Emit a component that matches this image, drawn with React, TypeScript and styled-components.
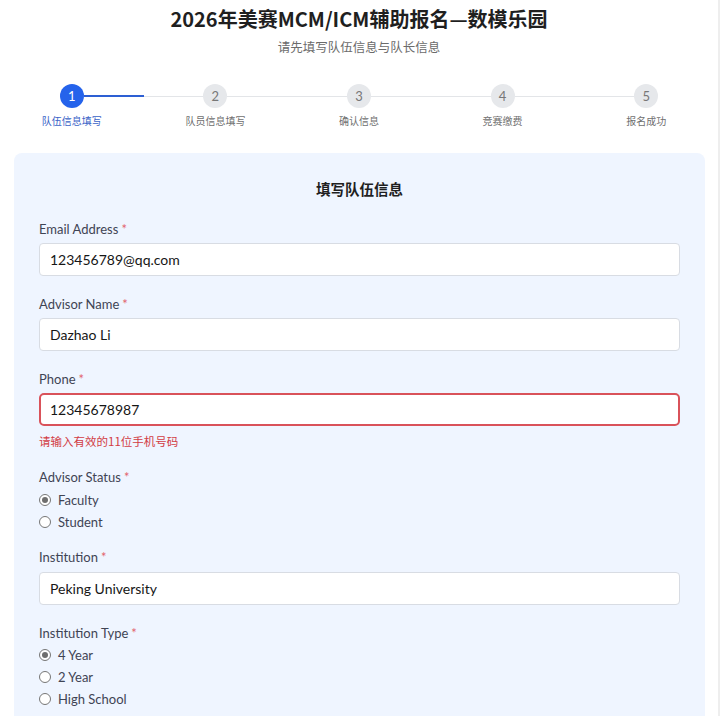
import styled, { createGlobalStyle } from 'styled-components'

const GlobalStyle = createGlobalStyle`
  html, body {
    margin: 0;
    padding: 0;
    background: #ffffff;
  }
  body {
    font-family: Lato, "Noto Sans CJK SC", sans-serif;
  }
`

const Page = styled.div`
  width: 718px;
  min-height: 716px;
  border-right: 2px solid #eeeeee;
  box-sizing: content-box;
  padding-top: 5px;
`

const Title = styled.h1`
  margin: 0;
  text-align: center;
  font-family: "Noto Sans CJK SC", sans-serif;
  font-size: 20px;
  line-height: 28px;
  font-weight: 700;
  color: #1f1f1f;
`

const Subtitle = styled.div`
  margin-top: 4px;
  text-align: center;
  font-family: "Noto Sans CJK SC", sans-serif;
  font-size: 12.5px;
  line-height: 20px;
  color: #6b6b6b;
`

const Steps = styled.div`
  display: grid;
  grid-template-columns: repeat(5, 1fr);
  margin-top: 27px;
`

const Step = styled.div`
  display: flex;
  flex-direction: column;
  align-items: stretch;
`

const StepTrack = styled.div`
  display: flex;
  align-items: center;
  height: 24px;
`

const Line = styled.div<{ $tone: 'blue' | 'gray' | 'none' }>`
  flex: 1;
  height: ${p => (p.$tone === 'blue' ? '1.5px' : '1px')};
  background: ${p => (p.$tone === 'blue' ? '#2d5fd3' : p.$tone === 'gray' ? '#e3e5e8' : 'transparent')};
`

const Circle = styled.div<{ $active: boolean }>`
  width: 24px;
  height: 24px;
  border-radius: 50%;
  display: flex;
  align-items: center;
  justify-content: center;
  font-size: 13px;
  background: ${p => (p.$active ? '#2563eb' : '#e6e8eb')};
  color: ${p => (p.$active ? '#ffffff' : '#777777')};
`

const StepLabel = styled.div<{ $active: boolean }>`
  margin-top: 4px;
  text-align: center;
  font-family: "Noto Sans CJK SC", sans-serif;
  font-size: 10px;
  line-height: 18px;
  color: ${p => (p.$active ? '#3a63c7' : '#6f6f6f')};
`

const Card = styled.div`
  margin: 23px 13px 0 14px;
  background: #eff5ff;
  border-radius: 8px;
  padding: 25px 25px 30px;
`

const CardTitle = styled.h2`
  margin: 0 0 20px;
  text-align: center;
  font-family: "Noto Sans CJK SC", sans-serif;
  font-size: 14.5px;
  line-height: 22px;
  font-weight: 700;
  color: #1f1f1f;
`

const Field = styled.div<{ $gap?: number }>`
  margin-bottom: ${p => p.$gap ?? 19}px;
`

const Label = styled.div<{ $below?: number }>`
  font-size: 13px;
  line-height: 18px;
  color: #3f4454;
  margin-bottom: ${p => p.$below ?? 5}px;
`

const Star = styled.span`
  color: #e2636e;
  margin-left: 3px;
`

const Input = styled.div<{ $error?: boolean }>`
  height: 33px;
  box-sizing: border-box;
  display: flex;
  align-items: center;
  padding: 0 ${p => (p.$error ? 9 : 10)}px;
  background: #ffffff;
  border: ${p => (p.$error ? '2px solid #d9525a' : '1px solid #d8dce3')};
  border-radius: ${p => (p.$error ? '5px' : '4px')};
  font-size: 14px;
  color: #161616;
`

const ErrorText = styled.div`
  margin-top: 7px;
  font-family: "Noto Sans CJK SC", sans-serif;
  font-size: 11.5px;
  line-height: 16px;
  color: #d23c44;
`

const RadioRow = styled.div`
  display: flex;
  align-items: center;
  height: 22px;
  font-size: 13px;
  color: #3f4454;
`

const Radio = styled.span<{ $checked: boolean }>`
  width: 12px;
  height: 12px;
  box-sizing: border-box;
  border-radius: 50%;
  border: 1px solid #767676;
  background: #ffffff;
  margin: 0 7px 0 0;
  display: flex;
  align-items: center;
  justify-content: center;
  &::after {
    content: '';
    width: 6px;
    height: 6px;
    border-radius: 50%;
    background: ${p => (p.$checked ? '#6e6e6e' : 'transparent')};
  }
`

const steps = ['队伍信息填写', '队员信息填写', '确认信息', '竞赛缴费', '报名成功']

const App = () => {
  return (
    <>
      <GlobalStyle />
      <Page>
        <Title>2026年美赛MCM/ICM辅助报名—数模乐园</Title>
        <Subtitle>请先填写队伍信息与队长信息</Subtitle>
        <Steps>
          {steps.map((s, i) => (
            <Step key={s}>
              <StepTrack>
                <Line $tone={i === 0 ? 'none' : 'gray'} />
                <Circle $active={i === 0}>{i + 1}</Circle>
                <Line $tone={i === 4 ? 'none' : i === 0 ? 'blue' : 'gray'} />
              </StepTrack>
              <StepLabel $active={i === 0}>{s}</StepLabel>
            </Step>
          ))}
        </Steps>
        <Card>
          <CardTitle>填写队伍信息</CardTitle>
          <Field>
            <Label>Email Address<Star>*</Star></Label>
            <Input>123456789@qq.com</Input>
          </Field>
          <Field>
            <Label>Advisor Name<Star>*</Star></Label>
            <Input>Dazhao Li</Input>
          </Field>
          <Field>
            <Label>Phone<Star>*</Star></Label>
            <Input $error>12345678987</Input>
            <ErrorText>请输入有效的11位手机号码</ErrorText>
          </Field>
          <Field $gap={15}>
            <Label $below={3}>Advisor Status<Star>*</Star></Label>
            <RadioRow><Radio $checked />Faculty</RadioRow>
            <RadioRow><Radio $checked={false} />Student</RadioRow>
          </Field>
          <Field>
            <Label $below={6}>Institution<Star>*</Star></Label>
            <Input>Peking University</Input>
          </Field>
          <Field>
            <Label $below={2}>Institution Type<Star>*</Star></Label>
            <RadioRow><Radio $checked />4 Year</RadioRow>
            <RadioRow><Radio $checked={false} />2 Year</RadioRow>
            <RadioRow><Radio $checked={false} />High School</RadioRow>
          </Field>
        </Card>
      </Page>
    </>
  )
}

export default App
